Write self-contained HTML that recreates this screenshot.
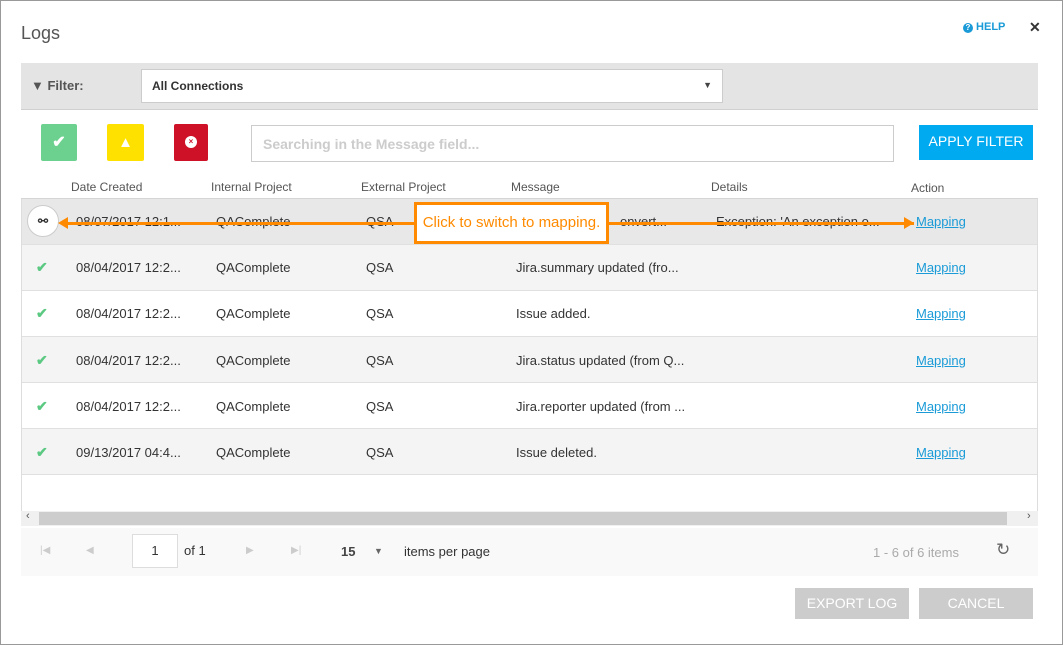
<html><head><style>
*{box-sizing:border-box}body{margin:0;width:1063px;height:645px;background:#fff;font-family:"Liberation Sans",sans-serif;position:relative;overflow:hidden;color:#333}
.a{position:absolute}
.t{font-size:13px;color:#333}
.h{font-size:12px;color:#555}
.lnk{color:#1a9bd7;text-decoration:underline;font-size:13px}
.row{position:absolute;left:22px;width:1016px;height:46px;border-bottom:1px solid #e0e0e0}
.ck{color:#5cc983;font-size:14px;font-weight:bold}
</style></head><body>
<div class="a" style="left:0;top:0;width:1063px;height:645px;border:1px solid #999"></div>
<div class="a" style="left:21px;top:23px;font-size:18px;color:#555">Logs</div>
<div class="a" style="left:963px;top:21px;font-size:11px;color:#1a9bd7;font-weight:bold"><span style="display:inline-block;width:10px;height:10px;border-radius:50%;background:#1a9bd7;color:#fff;font-size:8px;text-align:center;line-height:10px">?</span> HELP</div>
<div class="a" style="left:1029px;top:19px;font-size:14px;color:#333;font-weight:bold">✕</div>
<div class="a" style="left:21px;top:63px;width:1017px;height:47px;background:#e4e4e4;border-bottom:1px solid #d0d0d0"></div>
<div class="a" style="left:31px;top:78px;font-size:13px;font-weight:bold;color:#555">▼ Filter:</div>
<div class="a" style="left:141px;top:69px;width:582px;height:34px;background:#fff;border:1px solid #ccc;font-size:12px;font-weight:bold;color:#333;padding:9px 10px">All Connections<span style="position:absolute;right:10px;top:10px;font-size:9px;color:#444">▼</span></div>
<div class="a" style="left:41px;top:124px;width:36px;height:37px;background:#6cd18f;border-radius:2px;color:#fff;text-align:center;line-height:37px;font-weight:bold">✔</div>
<div class="a" style="left:107px;top:124px;width:37px;height:37px;background:#ffe100;border-radius:2px;color:#fff;text-align:center;line-height:37px;font-size:15px">▲</div>
<div class="a" style="left:174px;top:124px;width:34px;height:37px;background:#cf1128;border-radius:2px;text-align:center;padding-top:12px"><div style="width:12px;height:12px;border-radius:50%;background:#fff;margin:auto;color:#cf1128;font-size:8px;line-height:12px;font-weight:bold">×</div></div>
<div class="a" style="left:251px;top:125px;width:643px;height:37px;border:1px solid #ccc;font-size:14px;font-weight:bold;color:#ccc;padding:10px 11px">Searching in the Message field...</div>
<div class="a" style="left:919px;top:125px;width:114px;height:35px;background:#00aaf0;color:#fff;font-size:14px;text-align:center;line-height:32px">APPLY FILTER</div>
<div class="a h" style="left:71px;top:180px">Date Created</div>
<div class="a h" style="left:211px;top:180px">Internal Project</div>
<div class="a h" style="left:361px;top:180px">External Project</div>
<div class="a h" style="left:511px;top:180px">Message</div>
<div class="a h" style="left:711px;top:180px">Details</div>
<div class="a h" style="left:911px;top:181px">Action</div>
<div class="a" style="left:21px;top:198px;width:1017px;height:1px;background:#d5d5d5"></div>
<div class="row" style="top:199px;background:#e8e8e8"></div>
<div class="row" style="top:245px;background:#f4f4f4"></div>
<div class="row" style="top:291px;background:#fff"></div>
<div class="row" style="top:337px;background:#f4f4f4"></div>
<div class="row" style="top:383px;background:#fff"></div>
<div class="row" style="top:429px;background:#f4f4f4"></div>
<div class="a" style="left:21px;top:199px;width:1px;height:327px;background:#ddd"></div>
<div class="a" style="left:1037px;top:199px;width:1px;height:327px;background:#ddd"></div>
<!-- row1 -->
<div class="a" style="left:27px;top:205px;width:32px;height:32px;border-radius:50%;background:#fff;border:1px solid #ccc;text-align:center;line-height:30px;font-size:12px;font-weight:bold">⚯</div>
<div class="a t" style="left:76px;top:214px">08/07/2017 12:1...</div>
<div class="a t" style="left:216px;top:214px">QAComplete</div>
<div class="a t" style="left:366px;top:214px">QSA</div>
<div class="a t" style="left:620px;top:214px">onvert...</div>
<div class="a t" style="left:716px;top:214px">Exception: 'An exception o...</div>
<div class="a lnk" style="left:916px;top:214px">Mapping</div>
<div class="a" style="left:66px;top:222px;width:848px;height:3px;background:#ff8a00"></div>
<div class="a" style="left:58px;top:217px;width:0;height:0;border-top:6px solid transparent;border-bottom:6px solid transparent;border-right:10px solid #ff8a00"></div>
<div class="a" style="left:904px;top:217px;width:0;height:0;border-top:6px solid transparent;border-bottom:6px solid transparent;border-left:10px solid #ff8a00"></div>
<div class="a" style="left:414px;top:202px;width:195px;height:42px;background:#fff;border:3px solid #ff8a00;color:#ff8a00;font-size:15px;text-align:center;line-height:36px">Click to switch to mapping.</div>
<!-- rows -->
<div class="a ck" style="left:36px;top:259px">✔</div><div class="a t" style="left:76px;top:260px">08/04/2017 12:2...</div><div class="a t" style="left:216px;top:260px">QAComplete</div><div class="a t" style="left:366px;top:260px">QSA</div><div class="a t" style="left:516px;top:260px">Jira.summary updated (fro...</div><div class="a lnk" style="left:916px;top:260px">Mapping</div>
<div class="a ck" style="left:36px;top:305px">✔</div><div class="a t" style="left:76px;top:306px">08/04/2017 12:2...</div><div class="a t" style="left:216px;top:306px">QAComplete</div><div class="a t" style="left:366px;top:306px">QSA</div><div class="a t" style="left:516px;top:306px">Issue added.</div><div class="a lnk" style="left:916px;top:306px">Mapping</div>
<div class="a ck" style="left:36px;top:352px">✔</div><div class="a t" style="left:76px;top:353px">08/04/2017 12:2...</div><div class="a t" style="left:216px;top:353px">QAComplete</div><div class="a t" style="left:366px;top:353px">QSA</div><div class="a t" style="left:516px;top:353px">Jira.status updated (from Q...</div><div class="a lnk" style="left:916px;top:353px">Mapping</div>
<div class="a ck" style="left:36px;top:398px">✔</div><div class="a t" style="left:76px;top:399px">08/04/2017 12:2...</div><div class="a t" style="left:216px;top:399px">QAComplete</div><div class="a t" style="left:366px;top:399px">QSA</div><div class="a t" style="left:516px;top:399px">Jira.reporter updated (from ...</div><div class="a lnk" style="left:916px;top:399px">Mapping</div>
<div class="a ck" style="left:36px;top:444px">✔</div><div class="a t" style="left:76px;top:445px">09/13/2017 04:4...</div><div class="a t" style="left:216px;top:445px">QAComplete</div><div class="a t" style="left:366px;top:445px">QSA</div><div class="a t" style="left:516px;top:445px">Issue deleted.</div><div class="a lnk" style="left:916px;top:445px">Mapping</div>
<!-- scrollbar -->
<div class="a" style="left:21px;top:511px;width:1017px;height:15px;background:#f0f0f0"></div>
<div class="a" style="left:39px;top:512px;width:968px;height:13px;background:#cdcdcd"></div>
<div class="a" style="left:26px;top:510px;font-size:11px;color:#555">‹</div>
<div class="a" style="left:1027px;top:510px;font-size:11px;color:#555">›</div>
<!-- pager -->
<div class="a" style="left:21px;top:528px;width:1017px;height:48px;background:#f9f9f9"></div>
<div class="a" style="left:40px;top:545px;font-size:10px;color:#ccc">|◀</div>
<div class="a" style="left:86px;top:545px;font-size:10px;color:#ccc">◀</div>
<div class="a" style="left:132px;top:534px;width:46px;height:34px;background:#fff;border:1px solid #ddd;text-align:center;line-height:32px;font-size:13px">1</div>
<div class="a t" style="left:184px;top:543px">of 1</div>
<div class="a" style="left:246px;top:545px;font-size:10px;color:#ccc">▶</div>
<div class="a" style="left:291px;top:545px;font-size:10px;color:#ccc">▶|</div>
<div class="a" style="left:341px;top:544px;font-size:13px;font-weight:bold;color:#444">15</div>
<div class="a" style="left:374px;top:546px;font-size:9px;color:#666">▼</div>
<div class="a t" style="left:404px;top:544px">items per page</div>
<div class="a" style="left:873px;top:545px;font-size:13px;color:#aaa">1 - 6 of 6 items</div>
<div class="a" style="left:996px;top:540px;font-size:17px;color:#666">↻</div>
<!-- buttons -->
<div class="a" style="left:795px;top:588px;width:114px;height:31px;background:#ccc;color:#fff;font-size:14px;text-align:center;line-height:31px">EXPORT LOG</div>
<div class="a" style="left:919px;top:588px;width:114px;height:31px;background:#ccc;color:#fff;font-size:14px;text-align:center;line-height:31px">CANCEL</div>
</body></html>
